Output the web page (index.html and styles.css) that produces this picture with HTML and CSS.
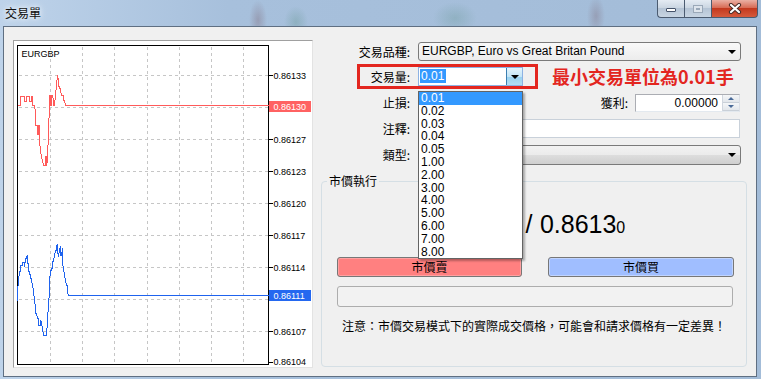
FILE: index.html
```html
<!DOCTYPE html>
<html lang="zh-Hant">
<head>
  <meta charset="UTF-8">
  <meta name="viewport" content="width=device-width, initial-scale=1.0">
  <title>交易單</title>
  <link rel="stylesheet" href="styles.css">
</head>
<body>
  <div class="titlebar">
    <span class="title">交易單</span>
    <div class="caption">
      <span class="cap-btn cap-min"><i></i></span>
      <span class="cap-btn cap-max"><i></i></span>
      <span class="cap-btn cap-close">
        <svg width="14" height="11" viewBox="0 0 14 11">
          <path d="M3 2 L11 9 M11 2 L3 9" stroke="#4a2c28" stroke-width="4.2" stroke-linecap="round"/>
          <path d="M3 2 L11 9 M11 2 L3 9" stroke="#fff" stroke-width="2.2" stroke-linecap="round"/>
        </svg>
      </span>
    </div>
  </div>

  <main class="client">
    <div class="chart-panel">
      <svg class="chart" width="298" height="326">
        <g transform="translate(-13.5 -40.5)" shape-rendering="crispEdges">
          <g class="grid">
            <path d="M50 46V364M82 46V364M114 46V364M147 46V364M179 46V364M211 46V364M243 46V364"/>
            <path d="M18 75H268M18 107H268M18 139H268M18 171H268M18 203H268M18 235H268M18 267H268M18 299H268M18 331H268"/>
          </g>
          <path class="ticks" d="M268 75H272M268 107H272M268 139H272M268 171H272M268 203H272M268 235H272M268 267H272M268 299H272M268 331H272M268 362H272"/>
          <rect class="frame" x="17" y="45" width="251" height="319"/>

          <text class="sym" x="21" y="56">EURGBP</text>
          <g class="axis">
            <text x="273" y="78.5">0.86133</text>
            <text x="273" y="142.5">0.86127</text>
            <text x="273" y="174.5">0.86123</text>
            <text x="273" y="206.5">0.86120</text>
            <text x="273" y="238.5">0.86117</text>
            <text x="273" y="270.5">0.86114</text>
            <text x="273" y="334.5">0.86107</text>
            <text x="273" y="364.5">0.86104</text>
          </g>

          <polyline class="ask" points="17,105 20,105 20,96 24,96 24,101 26,101 26,96 29,96 29,101 31,101 31,96 32,96 32,105 34,105 35,112 35,125 37,125 37,134 38,134 38,125 39,125 39,140 40,150 41,157 42,160 43,165 45,165 45,156 46,156 46,165 47,160 47,150 48,140 48,125 49,110 49,95 50,95 50,105 51,105 51,95 52,95 53,100 53,105 54,105 55,95 56,85 57,75 58,80 58,86 59,86 60,90 61,95 63,95 63,100 64,100 65,105 268,105"/>
          <polyline class="bid" points="17,300 17,292 18,280 19,272 20,270 20,265 22,265 22,262 24,262 24,266 25,260 26,256 27,255 27,262 28,264 28,270 29,272 30,276 31,280 32,285 33,290 34,300 35,307 35,313 36,313 37,318 38,318 38,325 40,325 40,320 41,322 42,328 43,335 46,335 46,330 47,325 47,318 48,305 49,290 49,280 50,272 51,268 52,268 52,262 53,260 54,255 55,250 56,250 56,245 57,244 57,252 58,255 59,250 60,246 60,255 61,255 62,248 62,262 63,268 64,275 65,280 66,285 67,285 67,292 68,295 268,295"/>

          <rect class="tag-ask" x="268.5" y="100.5" width="42" height="11"/>
          <text class="tag-text" x="273" y="109.5">0.86130</text>
          <rect class="tag-bid" x="268.5" y="289.5" width="42" height="11"/>
          <text class="tag-text" x="273" y="298.5">0.86111</text>
        </g>
      </svg>
    </div>

    <div class="order">
      <div class="row row-symbol">
        <span class="lbl">交易品種:</span>
        <div class="combo combo-wide">
          <span class="combo-text">EURGBP, Euro vs Great Britan Pound</span>
          <i class="arrow"></i>
        </div>
      </div>

      <div class="row row-volume">
        <div class="mark">
          <span class="lbl lbl-mark">交易量:</span>
          <div class="vol">
            <span class="vol-text"><span class="sel">0.01</span></span>
            <span class="vol-btn"><i class="arrow"></i></span>
            <ul class="vol-list">
              <li class="active">0.01</li>
              <li>0.02</li>
              <li>0.03</li>
              <li>0.04</li>
              <li>0.05</li>
              <li>1.00</li>
              <li>2.00</li>
              <li>3.00</li>
              <li>4.00</li>
              <li>5.00</li>
              <li>6.00</li>
              <li>7.00</li>
              <li>8.00</li>
            </ul>
          </div>
        </div>
        <span class="min-note">最小交易單位為0.01手</span>
      </div>

      <div class="row row-sltp">
        <span class="lbl">止損:</span>
        <div class="spin">
          <span class="spin-value">0.00000</span>
          <span class="spin-btns"><i class="up"></i><i class="down"></i></span>
        </div>
        <span class="lbl lbl-tp">獲利:</span>
        <div class="spin">
          <span class="spin-value">0.00000</span>
          <span class="spin-btns"><i class="up"></i><i class="down"></i></span>
        </div>
      </div>

      <div class="row row-comment">
        <span class="lbl">注釋:</span>
        <div class="textbox"></div>
      </div>

      <div class="row row-type">
        <span class="lbl">類型:</span>
        <div class="combo combo-type">
          <span class="combo-text">市價執行</span>
          <i class="arrow"></i>
        </div>
      </div>

      <fieldset class="market">
        <legend>市價執行</legend>
        <div class="price">
          <span class="covered"><span class="big">0.8611</span><span class="small">1</span></span>
          <span class="slash">/</span>
          <span class="big">0.8613</span><span class="small">0</span>
        </div>
        <div class="actions">
          <span class="btn btn-sell">市價賣</span>
          <span class="btn btn-buy">市價買</span>
        </div>
        <div class="status-bar"></div>
        <p class="warning">注意：市價交易模式下的實際成交價格，可能會和請求價格有一定差異！</p>
      </fieldset>
    </div>
  </main>
</body>
</html>
```

FILE: styles.css
```css
* {
  margin: 0;
  padding: 0;
  box-sizing: border-box;
}

body {
  width: 761px;
  height: 379px;
  overflow: hidden;
  font-family: "Liberation Sans", "Noto Sans CJK TC", sans-serif;
  font-size: 12px;
  color: #000;
  background:
    radial-gradient(9px 20px at 258px 20px, rgba(110, 70, 80, .28), transparent),
    radial-gradient(12px 16px at 296px 22px, rgba(70, 130, 110, .25), transparent),
    radial-gradient(22px 16px at 455px 18px, rgba(70, 130, 110, .22), transparent),
    radial-gradient(9px 20px at 596px 16px, rgba(110, 70, 80, .25), transparent),
    linear-gradient(to right, #bed3ea, #a7c0dc 30%, #a3bcd8);
}

/* title bar */
.titlebar {
  height: 26px;
  display: flex;
  justify-content: space-between;
  align-items: flex-start;
}

.title {
  padding: 6px 0 0 5px;
  font-family: "Noto Sans CJK TC", sans-serif;
  font-size: 12px;
  line-height: 14px;
  color: #111;
  text-shadow: 0 0 5px #fff, 0 0 8px #e8f0f8;
}

.caption {
  display: flex;
  margin-right: 3px;
}

.cap-btn {
  height: 18px;
  display: flex;
  align-items: center;
  justify-content: center;
  border: 1px solid #4b5b70;
  border-top: none;
  background: linear-gradient(#e4ebf3, #cbd6e2 45%, #b5c4d5 50%, #c8d5e3);
}

.cap-min {
  width: 27px;
  border-bottom-left-radius: 4px;
  border-right: none;
}

.cap-min i {
  width: 10px;
  height: 4px;
  margin-top: 3px;
  background: #fff;
  border: 1px solid #45536a;
  border-radius: 1px;
}

.cap-max {
  width: 27px;
  border-right: none;
}

.cap-max i {
  width: 10px;
  height: 8px;
  border: 1px solid #9aa8b8;
  box-shadow: inset 0 0 0 2px #dde4ec, inset 0 0 0 3px #9aa8b8;
}

.cap-close {
  width: 47px;
  border-bottom-right-radius: 4px;
  background: linear-gradient(#eab0a4, #d86c56 45%, #c3391f 50%, #d65a3c);
}

/* client area */
.client {
  margin: 0 4px 0 3px;
  height: 351px;
  display: flex;
  align-items: flex-start;
  border: 1px solid #5f6f82;
  background: #f0f0f0;
}

.chart-panel {
  width: 300px;
  height: 328px;
  margin: 13px 0 0 9px;
  border: 1px solid #a0a0a0;
  border-right-color: #e3e3e3;
  border-bottom-color: #e3e3e3;
}

.chart {
  display: block;
  background: #fff;
}

.grid path {
  fill: none;
  stroke: #c6c6c6;
  stroke-dasharray: 3 3;
}

.ticks,
.frame {
  fill: none;
  stroke: #000;
}

.sym,
.axis text,
.tag-text {
  font-family: "Liberation Sans", sans-serif;
  font-size: 9px;
}

.tag-text {
  fill: #fff;
}

.ask,
.bid {
  fill: none;
  stroke-width: 1;
}

.ask {
  stroke: #ff5a5a;
}

.bid {
  stroke: #1f63ee;
}

.tag-ask {
  fill: #ff6262;
}

.tag-bid {
  fill: #2468f0;
}

/* order form */
.order {
  width: 426px;
  margin-left: 8px;
  padding-top: 15px;
  display: flex;
  flex-direction: column;
}

.row {
  display: flex;
  align-items: center;
}

.lbl {
  width: 89px;
  margin-right: 8px;
  text-align: right;
  font-family: "Noto Sans CJK TC", sans-serif;
  line-height: 14px;
  white-space: nowrap;
}

.row-symbol {
  height: 19px;
}

.combo {
  height: 19px;
  display: flex;
  align-items: center;
  justify-content: space-between;
  padding: 0 4px 0 3px;
  border: 1px solid #7a7a7a;
  border-radius: 3px;
}

.combo-wide {
  width: 323px;
  background: linear-gradient(#f9f9f9, #ececec);
}

.combo-text {
  line-height: 15px;
}

.combo-type .combo-text {
  visibility: hidden;
}

.arrow {
  width: 0;
  height: 0;
  border-left: 4px solid transparent;
  border-right: 4px solid transparent;
  border-top: 4px solid #000;
}

/* volume row with the red mark */
.row-volume {
  margin-top: 3px;
  height: 25px;
}

.mark {
  width: 181px;
  height: 25px;
  margin-left: 36px;
  display: flex;
  align-items: flex-start;
  border: 3px solid #e3261f;
}

.lbl-mark {
  width: 50px;
  margin-top: 3px;
}

.vol {
  position: relative;
  width: 105px;
  height: 19px;
  display: flex;
  border: 1px solid #8db2e3;
  background: #fff;
}

.vol-text {
  flex: 1;
  padding: 1px 0 0 1px;
  line-height: 15px;
}

.sel {
  padding: 0 2px 0 1px;
  color: #fff;
  background: #3399ff;
}

.vol-btn {
  width: 16px;
  display: flex;
  align-items: center;
  justify-content: center;
  border-left: 1px solid #3c7fb1;
  background: linear-gradient(#e5f4fc, #c4e5f6 50%, #98d1ef 51%, #b3def5);
}

.vol-list {
  position: absolute;
  top: 23px;
  left: -1px;
  z-index: 10;
  width: 105px;
  list-style: none;
  border: 1px solid #646464;
  background: #fff;
  box-shadow: 2px 2px 2px rgba(0, 0, 0, .3);
}

.vol-list li {
  height: 12.8px;
  padding-left: 2px;
  line-height: 12.8px;
}

.vol-list .active {
  color: #fff;
  background: #3399ff;
}

.min-note {
  margin-left: 14px;
  font-family: "Noto Sans CJK TC", sans-serif;
  font-size: 18px;
  font-weight: bold;
  line-height: 25px;
  color: #e3261f;
  white-space: nowrap;
}

/* stop loss / take profit */
.row-sltp {
  margin-top: 5px;
  height: 18px;
}

.spin {
  width: 105px;
  height: 18px;
  display: flex;
  border: 1px solid #abadb3;
  border-right-color: #dbdfe6;
  border-bottom-color: #e3e9ef;
  background: #fff;
}

.spin-value {
  flex: 1;
  padding-right: 4px;
  text-align: right;
  line-height: 16px;
}

.spin-btns {
  width: 17px;
  display: flex;
  flex-direction: column;
  border-left: 1px solid #d0d6de;
}

.spin-btns i {
  flex: 1;
  display: flex;
  align-items: center;
  justify-content: center;
  background: linear-gradient(#f4f6f8, #e2e6eb);
  border-bottom: 1px solid #c9d0d8;
}

.spin-btns i::after {
  content: "";
  border-left: 3px solid transparent;
  border-right: 3px solid transparent;
}

.spin-btns .up::after {
  border-bottom: 3px solid #4a6a98;
}

.spin-btns .down::after {
  border-top: 3px solid #4a6a98;
}

.lbl-tp {
  width: auto;
  margin-left: auto;
  margin-right: 7px;
}

.row-sltp .spin:last-child {
  margin-right: 7px;
}

.row-comment {
  margin-top: 7px;
  height: 19px;
}

.textbox {
  width: 322px;
  height: 19px;
  border: 1px solid #c9d1da;
  background: #fff;
}

.row-type {
  margin-top: 7px;
  height: 20px;
}

.combo-type {
  width: 323px;
  height: 20px;
  background: linear-gradient(#f2f2f2, #ebebeb 50%, #dddddd 51%, #cfcfcf);
}

/* market execution group */
.market {
  margin-top: 10px;
  height: 192px;
  border: 1px solid #d5dfe5;
  border-radius: 4px;
}

.market legend {
  margin-left: 5px;
  padding: 0 2px;
  font-family: "Noto Sans CJK TC", sans-serif;
  line-height: 12px;
}

.price {
  margin-top: 23px;
  height: 28px;
  padding-right: 8px;
  text-align: center;
  line-height: 28px;
  white-space: nowrap;
}

/* bid price sits under the open volume list */
.covered {
  visibility: hidden;
}

.big,
.slash {
  font-size: 25px;
}

.slash {
  margin: 0 4px;
}

.small {
  font-size: 16px;
}

.actions {
  margin-top: 19px;
  padding-left: 15px;
  display: flex;
  gap: 26px;
}

.btn {
  width: 185px;
  height: 20px;
  display: flex;
  align-items: center;
  justify-content: center;
  font-family: "Noto Sans CJK TC", sans-serif;
  line-height: 14px;
  border: 1px solid #777;
  border-radius: 3px;
}

.btn-sell {
  background: #ff8080;
  box-shadow: inset 0 0 0 1px #ffa0a0;
}

.btn-buy {
  width: 186px;
  background: #a0beff;
  box-shadow: inset 0 0 0 1px #c0d4ff;
}

.status-bar {
  width: 396px;
  height: 21px;
  margin: 9px 0 0 15px;
  border: 1px solid #adadad;
  border-radius: 3px;
  background: #f2f2f2;
}

.warning {
  margin-top: 12px;
  text-align: center;
  font-family: "Noto Sans CJK TC", sans-serif;
  line-height: 14px;
}
```
